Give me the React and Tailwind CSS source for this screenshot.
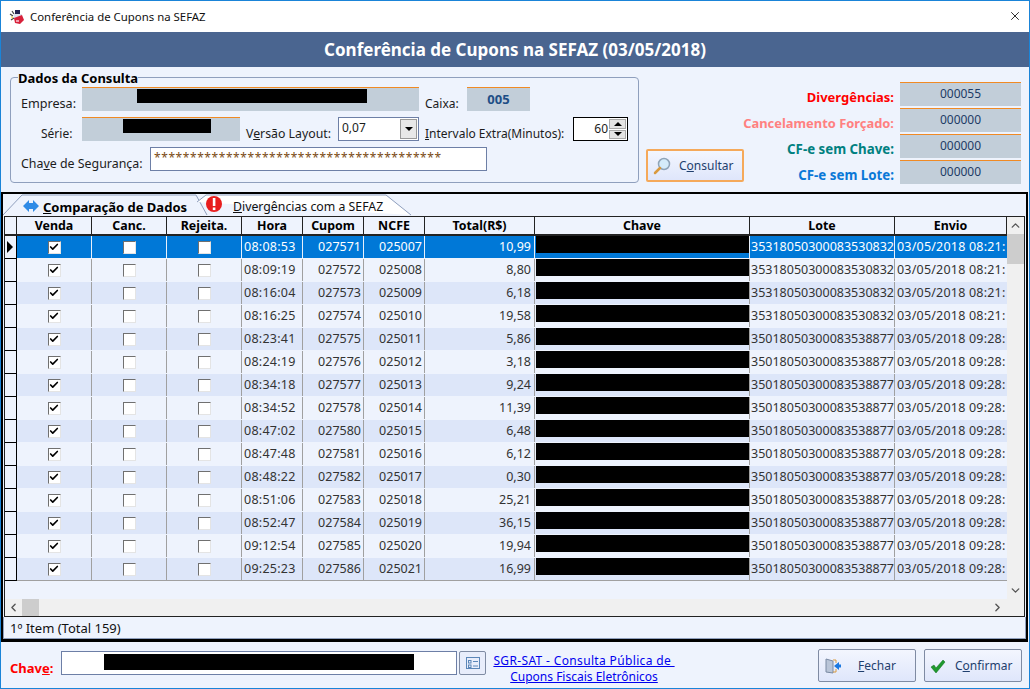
import { ChevronLeft, ChevronRight, ChevronUp, ChevronDown, Check, X } from 'lucide-react'

const rows = [
  ['08:08:53', '027571', '025007', '10,99', '35318050300083530832', '03/05/2018 08:21:'],
  ['08:09:19', '027572', '025008', '8,80', '35318050300083530832', '03/05/2018 08:21:'],
  ['08:16:04', '027573', '025009', '6,18', '35318050300083530832', '03/05/2018 08:21:'],
  ['08:16:25', '027574', '025010', '19,58', '35318050300083530832', '03/05/2018 08:21:'],
  ['08:23:41', '027575', '025011', '5,86', '35018050300083538877', '03/05/2018 09:28:'],
  ['08:24:19', '027576', '025012', '3,18', '35018050300083538877', '03/05/2018 09:28:'],
  ['08:34:18', '027577', '025013', '9,24', '35018050300083538877', '03/05/2018 09:28:'],
  ['08:34:52', '027578', '025014', '11,39', '35018050300083538877', '03/05/2018 09:28:'],
  ['08:47:02', '027580', '025015', '6,48', '35018050300083538877', '03/05/2018 09:28:'],
  ['08:47:48', '027581', '025016', '6,12', '35018050300083538877', '03/05/2018 09:28:'],
  ['08:48:22', '027582', '025017', '0,30', '35018050300083538877', '03/05/2018 09:28:'],
  ['08:51:06', '027583', '025018', '25,21', '35018050300083538877', '03/05/2018 09:28:'],
  ['08:52:47', '027584', '025019', '36,15', '35018050300083538877', '03/05/2018 09:28:'],
  ['09:12:54', '027585', '025020', '19,94', '35018050300083538877', '03/05/2018 09:28:'],
  ['09:25:23', '027586', '025021', '16,99', '35018050300083538877', '03/05/2018 09:28:'],
]

const headers = [
  ['Venda', 'w-[75px]'],
  ['Canc.', 'w-[75px]'],
  ['Rejeita.', 'w-[75px]'],
  ['Hora', 'w-[61px]'],
  ['Cupom', 'w-[61px]'],
  ['NCFE', 'w-[61px]'],
  ['Total(R$)', 'w-[110px]'],
  ['Chave', 'w-[215px]'],
  ['Lote', 'w-[145px]'],
  ['Envio', 'w-[112px]'],
]

const counters = [
  ['Divergências:', '000055', 'text-[#ff0000] text-[13px] top-[90px]', 'top-[81px]'],
  ['Cancelamento Forçado:', '000000', 'text-[#ff8080] text-[12.9px] top-[116px]', 'top-[107px]'],
  ['CF-e sem Chave:', '000000', 'text-[#008080] text-[13.3px] top-[142px]', 'top-[133px]'],
  ['CF-e sem Lote:', '000000', 'text-[#0a78d7] text-[13.3px] top-[168px]', 'top-[159px]'],
]

const CheckBox = ({ checked }) => (
  <div className="w-[13px] h-[13px] bg-white border border-[#707070] border-b-[#e4e4e4] border-r-[#e4e4e4] flex items-center justify-center">
    {checked && <Check size={10} strokeWidth={4} className="text-black" />}
  </div>
)

const ReadOnlyField = ({ className, children }) => (
  <div className={`absolute bg-[#c2ced9] border-t border-[#f08a24] ${className}`}>{children}</div>
)

const Cell = ({ w, selected, className = '', children }) => (
  <div className={`${w} shrink-0 h-full flex items-center overflow-hidden whitespace-nowrap border-r ${selected ? 'border-[#e8f0fb]' : 'border-[#a0a0a0]'} ${className}`}>
    {children}
  </div>
)

const GridRow = ({ row, index, last }) => {
  const selected = index === 0
  const stripe = selected ? 'bg-[#0078d7] text-white' : index % 2 === 0 ? 'bg-[#dde6f9] text-[#333]' : 'bg-[#eef3fd] text-[#333]'
  return (
    <div className="flex h-[23px]">
      <div className="w-[12px] shrink-0 bg-[#eef3fd] border-r border-b border-black flex items-center pl-[2px]">
        {selected && <div className="w-0 h-0 border-y-[6px] border-y-transparent border-l-[6px] border-l-black" />}
      </div>
      <div className={`flex h-full border-b ${last ? 'border-[#a0a0a0]' : 'border-[#eef3fd]'} ${stripe}`}>
        <Cell w="w-[75px]" selected={selected} className="justify-center"><CheckBox checked /></Cell>
        <Cell w="w-[75px]" selected={selected} className="justify-center"><CheckBox /></Cell>
        <Cell w="w-[75px]" selected={selected} className="justify-center"><CheckBox /></Cell>
        <Cell w="w-[61px]" selected={selected} className="pl-[2px] pt-[1px] tracking-[0.25px]">{row[0]}</Cell>
        <Cell w="w-[61px]" selected={selected} className="justify-end pr-[2px] pt-[1px]">{row[1]}</Cell>
        <Cell w="w-[61px]" selected={selected} className="justify-end pr-[2px] pt-[1px]">{row[2]}</Cell>
        <Cell w="w-[110px]" selected={selected} className="justify-end pr-[3px] pt-[1px]">{row[3]}</Cell>
        <Cell w="w-[215px]" selected={selected} className="pl-[1px] items-start"><div className="w-[213px] h-[17px] bg-black" /></Cell>
        <Cell w="w-[145px]" selected={selected} className="pl-[1px] pt-[1px]">{row[4]}</Cell>
        <Cell w="w-[112px]" selected={selected} className="pl-[2px] pt-[1px] border-r-0 tracking-[0.2px]">{row[5]}</Cell>
      </div>
    </div>
  )
}

const PushButton = ({ className, children }) => (
  <div className={`absolute h-[33px] rounded-[2px] border border-[#7f8ba3] bg-gradient-to-b from-[#f3f6fe] to-[#dfe6fb] flex items-center ${className}`}>
    {children}
  </div>
)

export default function App() {
  return (
    <div className="relative w-[1030px] h-[689px] overflow-hidden bg-[#eef3fd] border border-[#1a84d8] text-[12px] leading-none text-[#1c1c1c] font-['Noto_Sans','DejaVu_Sans',sans-serif]">
      {/* Title bar */}
      <div className="absolute left-0 top-0 w-[1028px] h-[31px] bg-white flex items-center">
        <svg width="16" height="16" viewBox="0 0 16 16" className="ml-[8px]">
          <path d="M1 5l3 2M2 11l3-2M3 2l2 3" stroke="#444" strokeWidth="1.2" />
          <path d="M2 7l2 1-1 2z" fill="#f0d23c" />
          <rect x="6" y="1" width="5" height="4" fill="#23234f" />
          <rect x="5" y="5" width="8" height="4" fill="#dfe3ef" />
          <path d="M5 9l8-3 2 5-4 4-5-1z" fill="#d8213a" />
          <path d="M7 11h3v2H7z" fill="#f0a0b0" />
        </svg>
        <span className="ml-[5px] text-[11.4px] text-[#111]">Conferência de Cupons na SEFAZ</span>
        <X size={14} strokeWidth={1.4} className="absolute right-[7px] top-[8px] text-black" />
      </div>
      <div className="absolute left-0 top-[31px] w-[1028px] h-[35px] bg-[#4a6590] flex items-center justify-center text-white font-bold text-[17px]">
        Conferência de Cupons na SEFAZ (03/05/2018)
      </div>

      {/* Dados da Consulta */}
      <div className="absolute left-[9px] top-[76px] w-[629px] h-[106px] border border-[#8f9fbd] rounded-[4px]" />
      <div className="absolute left-[17px] top-[71px] bg-[#eef3fd] font-bold text-[13px] text-black">Dados da Consulta</div>
      <span className="absolute left-[20px] top-[97px] text-[12.6px]">Empresa:</span>
      <ReadOnlyField className="left-[81px] top-[86px] w-[337px] h-[24px]"><div className="ml-[55px] mt-[1px] w-[230px] h-[14px] bg-black" /></ReadOnlyField>
      <span className="absolute left-[424px] top-[97px]">Caixa:</span>
      <ReadOnlyField className="left-[466px] top-[86px] w-[63px] h-[24px] flex items-start pt-[5px] justify-center font-bold text-[13px] text-[#1e4f86]">005</ReadOnlyField>
      <span className="absolute left-[40px] top-[127px]">Série:</span>
      <ReadOnlyField className="left-[81px] top-[116px] w-[158px] h-[24px]"><div className="ml-[41px] mt-[1px] w-[88px] h-[14px] bg-black" /></ReadOnlyField>
      <span className="absolute left-[245px] top-[127px] text-[12.3px]">V<u>e</u>rsão Layout:</span>
      <div className="absolute left-[337px] top-[116px] w-[81px] h-[24px] bg-white border border-[#6d7fa6] flex items-center pl-[3px]">
        <span className="-mt-[3px]">0,07</span>
        <div className="absolute right-[1px] top-[1px] w-[17px] h-[20px] bg-[#e8e8e8] border border-[#999] flex items-center justify-center">
          <div className="w-0 h-0 border-x-[4px] border-x-transparent border-t-[4px] border-t-black" />
        </div>
      </div>
      <span className="absolute left-[424px] top-[127px]"><u>I</u>ntervalo Extra(Minutos):</span>
      <div className="absolute left-[572px] top-[116px] w-[55px] h-[24px] bg-white border border-black flex items-center justify-end pr-[19px]">
        60
        <div className="absolute right-[1px] top-[1px] w-[17px] h-[20px] flex flex-col gap-[1px]">
          <div className="flex-1 bg-[#e4e4e4] border border-[#aaa] flex items-center justify-center"><div className="w-0 h-0 border-x-[4px] border-x-transparent border-b-[4px] border-b-black" /></div>
          <div className="flex-1 bg-[#e4e4e4] border border-[#aaa] flex items-center justify-center"><div className="w-0 h-0 border-x-[4px] border-x-transparent border-t-[4px] border-t-black" /></div>
        </div>
      </div>
      <span className="absolute left-[20px] top-[157px] text-[12.4px]">Cha<u>v</u>e de Segurança:</span>
      <div className="absolute left-[149px] top-[146px] w-[337px] h-[24px] bg-white border border-[#6d7fa6] pl-[3px] pt-[4px] text-[#7a4a12] font-['Liberation_Sans',sans-serif] text-[12px] tracking-[0.58px]">
        ****************************************
      </div>

      {/* Consultar */}
      <PushButton className="left-[645px] top-[148px] w-[98px] border-2 border-[#f5a95a]">
        <svg width="20" height="20" viewBox="0 0 20 20" className="ml-[4px]">
          <circle cx="12" cy="8" r="5.5" fill="#d5ecfa" stroke="#8fa4b8" strokeWidth="1.5" />
          <path d="M8 12l-5 5" stroke="#d99a3f" strokeWidth="2.5" strokeLinecap="round" />
        </svg>
        <span className="ml-[7px] text-[#1f3f6e]">C<u>o</u>nsultar</span>
      </PushButton>

      {/* Contadores */}
      {counters.map(([label, value, labelClass, fieldTop]) => (
        <div key={label}>
          <div className={`absolute right-[135px] font-bold text-right whitespace-nowrap ${labelClass}`}>{label}</div>
          <ReadOnlyField className={`left-[899px] w-[121px] h-[24px] flex items-start pt-[5px] justify-center text-[#1e3c66] ${fieldTop}`}>
            {value}
          </ReadOnlyField>
        </div>
      ))}

      {/* Abas */}
      <div className="absolute left-0 top-[191px] w-[1027px] h-[450px] border-2 border-black border-b-[3px] bg-[#eef3fd]">
        <svg width="420" height="23" className="absolute left-0 top-0">
          <path d="M0 21L19 1H193L204 21" fill="#eef3fd" stroke="#8f9fbd" />
          <path d="M194 8L203 1H383L408 21" fill="#ffffff" stroke="#8f9fbd" />
          <path d="M20 12l6-6v3h4V6l6 6-6 6v-3h-4v3z" fill="#2f8be6" />
          <circle cx="211" cy="10" r="8" fill="#e81e1e" />
          <rect x="209.8" y="4" width="2.6" height="8" fill="#fff" />
          <rect x="209.8" y="13.5" width="2.6" height="2.6" fill="#fff" />
        </svg>
        <span className="absolute left-[40px] top-[7px] font-bold text-[13px] text-black"><u>C</u>omparação de Dados</span>
        <span className="absolute left-[230px] top-[7px] text-[12.3px] text-[#111]"><u>D</u>ivergências com a SEFAZ</span>

        {/* Grid */}
        <div className="absolute left-[1px] top-[22px] w-[1021px] h-[401px] border border-[#222] overflow-hidden text-[12.5px]">
          <div className="flex h-[19px] bg-[#eef3fd] font-bold text-[12.4px] text-black">
            <div className="w-[12px] shrink-0 border-r border-b-2 border-[#222]" />
            {headers.map(([name, w]) => (
              <div key={name} className={`${w} shrink-0 flex items-center justify-center pt-[2px] border-r border-b-2 border-[#222]`}>{name}</div>
            ))}
          </div>
          {rows.map((row, i) => (
            <GridRow key={row[1]} row={row} index={i} last={i === rows.length - 1} />
          ))}

          {/* Scroll vertical */}
          <div className="absolute right-0 top-0 w-[17px] h-[382px] bg-[#f0f0f0]">
            <ChevronUp size={13} strokeWidth={2.5} className="absolute left-[2px] top-[2px] text-[#555]" />
            <div className="absolute left-0 top-[17px] w-full h-[30px] bg-[#cdcdcd]" />
            <ChevronDown size={13} strokeWidth={2.5} className="absolute left-[2px] bottom-[2px] text-[#555]" />
          </div>
          {/* Scroll horizontal */}
          <div className="absolute left-0 bottom-0 w-full h-[17px] bg-[#f0f0f0]">
            <ChevronLeft size={13} strokeWidth={2.5} className="absolute left-[2px] top-[2px] text-[#555]" />
            <div className="absolute left-[17px] top-0 w-[17px] h-full bg-[#cdcdcd]" />
            <ChevronRight size={13} strokeWidth={2.5} className="absolute right-[20px] top-[2px] text-[#555]" />
          </div>
        </div>
        <span className="absolute left-[7px] top-[428px] text-[13px] text-[#111]">1º Item (Total 159)</span>
        <div className="absolute left-0 top-[423px] bottom-0 right-0 border-x border-b border-[#8f9fbd]" />
      </div>

      {/* Rodape */}
      <span className="absolute left-[9px] top-[661px] font-bold text-[13px] text-[#ff0000]">Chav<u>e</u>:</span>
      <div className="absolute left-[60px] top-[650px] w-[396px] h-[24px] bg-white border border-[#6d7fa6]">
        <div className="ml-[42px] mt-[2px] w-[310px] h-[16px] bg-black" />
      </div>
      <div className="absolute left-[458px] top-[650px] w-[27px] h-[24px] rounded-[2px] border border-[#7f8ba3] bg-[#e8edfb] flex items-center justify-center">
        <svg width="16" height="14" viewBox="0 0 16 14" fill="none" stroke="#5b86b8">
          <rect x="1.5" y="1.5" width="13" height="11" />
          <rect x="3.5" y="4.5" width="2.5" height="2.5" />
          <rect x="3.5" y="9" width="2.5" height="2.5" />
          <path d="M8 5.5h5M8 10h5" />
        </svg>
      </div>
      <div className="absolute left-[484px] top-[652px] w-[198px] text-center text-[#0000ee] underline leading-[16px]">
        <span className="tracking-[0.35px]">SGR-SAT - Consulta Pública de&nbsp;</span>
        <br />
        Cupons Fiscais Eletrônicos
      </div>

      <PushButton className="left-[817px] top-[648px] w-[98px]">
        <svg width="18" height="18" viewBox="0 0 18 18" className="ml-[5px]">
          <path d="M2 2l7 2v12l-7-1z" fill="#b9c5d8" stroke="#7a8aa3" />
          <path d="M9 3h3v3M9 15h3v-3" fill="none" stroke="#d99a3f" />
          <path d="M10 9l5-4v2.5h2v3h-2V13z" fill="#1b78e0" />
        </svg>
        <span className="ml-[16px] text-[#1f3f6e]"><u>F</u>echar</span>
      </PushButton>
      <PushButton className="left-[923px] top-[648px] w-[98px]">
        <svg width="16" height="14" viewBox="0 0 16 14" className="ml-[5px]">
          <path d="M1 8l3-2 2 3 7-8 2 2-9 11z" fill="#1f9a2e" stroke="#0e6b1a" strokeWidth="0.5" />
        </svg>
        <span className="ml-[9px] text-[#1f3f6e]">C<u>o</u>nfirmar</span>
      </PushButton>
    </div>
  )
}
